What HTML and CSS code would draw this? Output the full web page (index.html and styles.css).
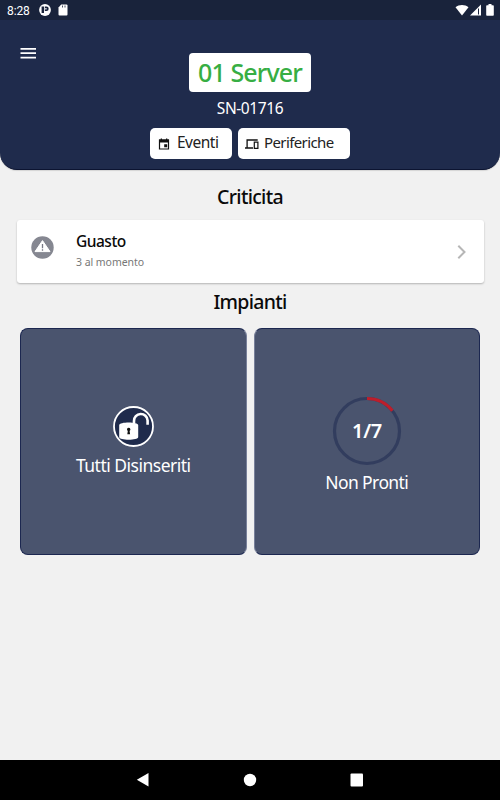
FILE: index.html
```html
<!DOCTYPE html>
<html lang="it">
<head>
    <meta charset="UTF-8">
    <meta name="viewport" content="width=device-width, initial-scale=1.0">
    <title>01 Server</title>
    <link rel="stylesheet" href="styles.css">
</head>
<body>
    <div class="app">
        <!-- Barra di stato -->
        <div class="status-bar">
            <span class="clock">8:28</span>
            <svg class="status-app" width="12" height="12" viewBox="0 0 12 12">
                <circle cx="6" cy="6" r="5.9" fill="#fff"/>
                <path d="M2.600 2.600h2.400v6.400H2.600zM5.800 2.600h1.700a2.200 2.200 0 0 1 0 4.400H5.800z" fill="#19233b"/>
                <path d="M6.300 3.900h1.200v1.500H6.300z" fill="#fff"/>
            </svg>
            <svg class="status-sd" width="10" height="12" viewBox="0 0 10 12">
                <path d="M3.200.5H8.500a1 1 0 0 1 1 1v9a1 1 0 0 1-1 1h-7a1 1 0 0 1-1-1V3.500z" fill="#fff"/>
                <path d="M4.500 1.500v2M7 1.500v2" stroke="#19233b" stroke-width=".8"/>
            </svg>
            <div class="status-right">
                <svg width="14" height="12" viewBox="0 0 14 12">
                    <path d="M7 11.500L.5 3.300C4 .2 10 .2 13.500 3.300z" fill="#fff"/>
                </svg>
                <svg width="12" height="12" viewBox="0 0 12 12">
                    <path d="M0 11.500L11 .5v11z" fill="#fff"/>
                    <path d="M8.500 4.500v6" stroke="#19233b" stroke-width="1"/>
                </svg>
                <svg class="battery" width="8" height="12" viewBox="0 0 8 12">
                    <path d="M2.500 0h3v1.200H7a.8.8 0 0 1 .8.8v9a.8.8 0 0 1-.8.8H1a.8.8 0 0 1-.8-.8V2a.8.8 0 0 1 .8-.8h1.500z" fill="#fff"/>
                </svg>
            </div>
        </div>

        <!-- Intestazione -->
        <div class="header">
            <svg class="menu" width="16" height="12" viewBox="0 0 16 12">
                <path d="M.5 1.800h15.500M.5 6.200h15.500M.5 10.600h15.500" stroke="#fff" stroke-width="1.700"/>
            </svg>
            <h1 class="server-name">01 Server</h1>
            <p class="serial">SN-01716</p>
            <div class="buttons">
                <div class="btn btn-eventi">
                    <svg width="12" height="12" viewBox="0 0 12 12">
                        <path d="M1.500 2h9v9h-9z" fill="none" stroke="#111" stroke-width="1.200"/>
                        <path d="M1 1.500h10v3H1zM2.700.4h1.300v2H2.700zM8 .4h1.300v2H8zM6.200 6.200h3v3h-3z" fill="#111"/>
                    </svg>
                    <span>Eventi</span>
                </div>
                <div class="btn btn-periferiche">
                    <svg width="14" height="12" viewBox="0 0 14 12">
                        <path d="M12.700 2H2.100v7.500M0 10h8" fill="none" stroke="#111" stroke-width="1.300"/>
                        <path d="M9.300 4.200h3.600v6.200H9.300z" fill="none" stroke="#111" stroke-width="1.200"/>
                    </svg>
                    <span>Periferiche</span>
                </div>
            </div>
        </div>

        <!-- Contenuto -->
        <h2 class="title title-criticita">Criticita</h2>
        <div class="alert">
            <svg class="alert-icon" width="23" height="23" viewBox="0 0 23 23">
                <circle cx="11.500" cy="11.500" r="11.200" fill="#858791"/>
                <path d="M11.500 4.600L19 15.600H4z" fill="#fff" stroke="#fff" stroke-width="1" stroke-linejoin="round"/>
                <path d="M11.500 8v4.300M11.500 13.300v1.500" stroke="#777985" stroke-width="1.300"/>
            </svg>
            <div class="alert-text">
                <h3>Guasto</h3>
                <p>3 al momento</p>
            </div>
            <svg width="10" height="16" viewBox="0 0 10 16">
                <path d="M1.300 1.800L7.500 8l-6.200 6.200" fill="none" stroke="#b6b6b6" stroke-width="2"/>
            </svg>
        </div>

        <h2 class="title title-impianti">Impianti</h2>
        <div class="cards">
            <div class="card">
                <svg width="42" height="42" viewBox="0 0 42 42">
                    <circle cx="21.500" cy="21.500" r="19.500" fill="#1f2b4c" stroke="#fff" stroke-width="1.800"/>
                    <path d="M22 18.500v-2.500a6.600 6.600 0 0 1 13.600-.5v4.300" fill="none" stroke="#fff" stroke-width="2.600"/>
                    <path d="M7.200 20c0-3.500 19-3.500 19 0v12c0 3.600-19 3.600-19 0z" fill="#fff"/>
                    <path d="M16.700 22.800a1.800 1.800 0 0 1 .9 3.300l.5 3.200h-2.800l.5-3.200a1.800 1.800 0 0 1 .9-3.300z" fill="#111"/>
                </svg>
                <p class="label-tutti">Tutti Disinseriti</p>
            </div>
            <div class="card card-pronti">
                <svg class="ring" width="70" height="70" viewBox="0 0 70 70">
                    <circle cx="35" cy="35" r="32.500" fill="none" stroke="#323d5e" stroke-width="3.200"/>
                    <path d="M35 2.500A32.500 32.500 0 0 1 60.400 14.700" fill="none" stroke="#bd1e2b" stroke-width="3.200"/>
                    <text class="ring-text" x="35" y="42" text-anchor="middle">1/7</text>
                </svg>
                <p class="label-pronti">Non Pronti</p>
            </div>
        </div>

        <!-- Barra di navigazione -->
        <div class="nav-bar">
            <svg width="14" height="16" viewBox="0 0 14 16">
                <path d="M12.500 1v13.500L.8 7.800z" fill="#fff"/>
            </svg>
            <svg width="14" height="14" viewBox="0 0 14 14">
                <circle cx="7" cy="7" r="6.200" fill="#fff"/>
            </svg>
            <svg width="14" height="14" viewBox="0 0 14 14">
                <rect x=".5" y=".5" width="12.500" height="13" rx="1" fill="#fff"/>
            </svg>
        </div>
    </div>
</body>
</html>
```
FILE: styles.css
```css
* {
    box-sizing: border-box;
}

body {
    margin: 0;
    font-family: "Noto Sans", "Open Sans", sans-serif;
    background-color: #f1f1f1;
}

h1, h2, h3, p {
    margin: 0;
}

svg {
    display: block;
    flex-shrink: 0;
}

.app {
    display: flex;
    flex-direction: column;
    height: 800px;
    overflow: hidden;
}

/* Barra di stato */
.status-bar {
    display: flex;
    align-items: center;
    height: 20px;
    padding: 0 6px 0 7px;
    background-color: #19233b;
    color: #fff;
}

.clock {
    width: 32px;
    padding-top: 1px;
    font-family: Roboto, sans-serif;
    font-size: 12px;
    letter-spacing: -0.1px;
}

.status-sd {
    margin-left: 7px;
}

.status-right {
    display: flex;
    gap: 1px;
    margin-left: auto;
}

.battery {
    margin-left: 3px;
}

/* Intestazione */
.header {
    display: flex;
    flex-direction: column;
    align-items: center;
    height: 150px;
    padding-top: 27px;
    background-color: #1f2b4c;
    border-bottom: 1px solid #0c1431;
    border-radius: 0 0 17px 17px;
    box-shadow: 0 1px 1px rgba(0, 0, 0, 0.12);
    color: #fff;
}

.menu {
    align-self: flex-start;
    margin-left: 20px;
}

.server-name {
    width: 122px;
    height: 39px;
    margin-top: -6px;
    border-radius: 4px;
    background-color: #fff;
    color: #37ae43;
    font-size: 25px;
    font-weight: 500;
    line-height: 38px;
    letter-spacing: -0.9px;
    text-align: center;
    white-space: nowrap;
}

.serial {
    margin-top: 5px;
    font-size: 15.5px;
    line-height: 22px;
    letter-spacing: -0.4px;
}

.buttons {
    display: flex;
    gap: 6px;
    margin-top: 9px;
}

.btn {
    display: flex;
    align-items: center;
    height: 31px;
    padding-left: 8px;
    border-radius: 5px;
    background-color: #fff;
    color: #222;
    font-size: 15.5px;
    line-height: 28px;
    letter-spacing: -0.5px;
}

.btn span {
    padding-bottom: 3px;
}

.btn-eventi {
    width: 82px;
    gap: 7px;
}

.btn-periferiche {
    width: 112px;
    gap: 5px;
    padding-left: 7px;
    font-size: 15px;
    letter-spacing: -0.6px;
}

/* Titoli delle sezioni */
.title {
    color: #0a0a0a;
    font-size: 19.5px;
    font-weight: 500;
    line-height: 28px;
    letter-spacing: -0.7px;
    text-align: center;
}

.title-criticita {
    margin-top: 13px;
}

.title-impianti {
    margin-top: 5px;
}

/* Riga del guasto */
.alert {
    display: flex;
    align-items: center;
    height: 63px;
    margin: 9px 16px 0 17px;
    padding: 0 17px 0 14px;
    border-radius: 3px;
    background-color: #fff;
    box-shadow: 0 1px 2px rgba(0, 0, 0, 0.25);
}

.alert-icon {
    margin-bottom: 9px;
}

.alert-text {
    flex: 1;
    margin: 0 0 2px 22px;
}

.alert-text h3 {
    color: #0a0a0a;
    font-size: 15.5px;
    font-weight: 500;
    line-height: 23px;
    letter-spacing: -0.5px;
}

.alert-text p {
    color: #777;
    font-size: 10.5px;
    line-height: 19px;
    letter-spacing: -0.05px;
}

/* Riquadri */
.cards {
    display: grid;
    grid-template-columns: 1fr 1fr;
    gap: 7px;
    margin: 12px 20px 0;
}

.card {
    display: flex;
    flex-direction: column;
    align-items: center;
    justify-content: center;
    height: 227px;
    border: 1px solid #1c2750;
    border-right-color: #78809a;
    border-radius: 8px;
    background-color: #4a546e;
    color: #fff;
    font-size: 17.5px;
    line-height: 26px;
}

.card-pronti {
    padding-top: 7px;
    border-left-color: #78809a;
    border-right-color: #1c2750;
}

.label-tutti {
    margin-top: 5px;
    letter-spacing: -0.5px;
}

.label-pronti {
    margin-top: 3px;
    letter-spacing: -0.6px;
}

.ring-text {
    fill: #fff;
    font-size: 20px;
    font-weight: 600;
    letter-spacing: -0.3px;
}

/* Barra di navigazione */
.nav-bar {
    display: flex;
    align-items: center;
    justify-content: center;
    gap: 93px;
    height: 40px;
    margin-top: auto;
    background-color: #000;
}
```
